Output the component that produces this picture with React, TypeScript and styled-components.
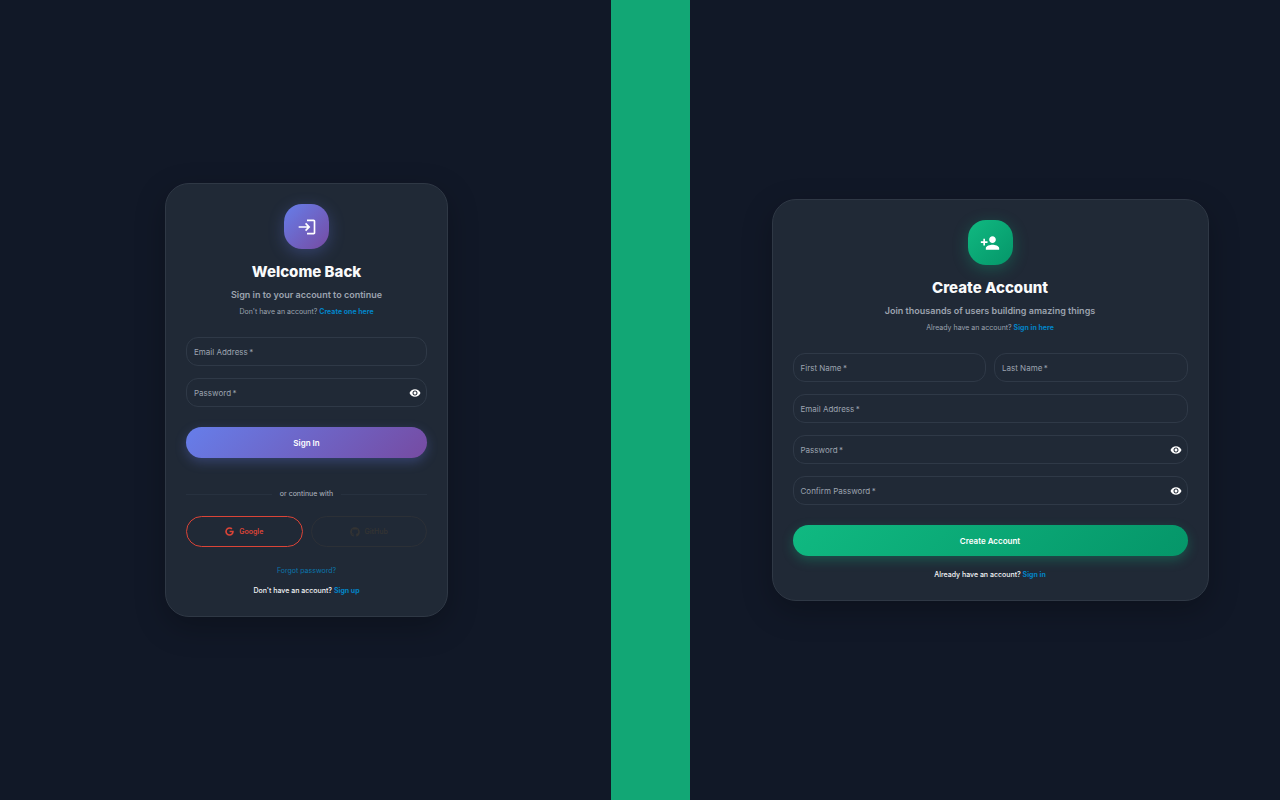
import React, { useId, useState } from "react";
import type { ReactNode } from "react";
import styled, { createGlobalStyle } from "styled-components";
import { MdLogin, MdPersonAdd, MdVisibility, MdVisibilityOff } from "react-icons/md";
import { FaGithub, FaGoogle } from "react-icons/fa";

const violet = {
  fill: "linear-gradient(135deg, #667eea 0%, #764ba2 100%)",
  glow: "rgba(102, 126, 234, 0.3)",
};
const emerald = {
  fill: "linear-gradient(135deg, #10b981 0%, #059669 100%)",
  glow: "rgba(16, 185, 129, 0.3)",
};
type Tone = typeof violet;

const GlobalStyle = createGlobalStyle`
  *, *::before, *::after { box-sizing: border-box; }
  body {
    margin: 0;
    background: #111827;
    color: #f9fafb;
    font-family: Inter, "Liberation Sans", sans-serif;
  }
  button, input { font: inherit; }
`;

const Page = styled.div`
  display: grid;
  grid-template-columns: 611fr 79fr 590fr;
  min-height: 100vh;
`;

const Panel = styled.main<{ $inset: number }>`
  display: flex;
  align-items: center;
  justify-content: center;
  padding-left: ${(p) => p.$inset}px;
`;

const Band = styled.div`
  background: #12a775;
`;

const Card = styled.section<{ $max: number }>`
  flex: 0 1 ${(p) => p.$max}px;
  padding: 20px 20px 19px;
  border: 1px solid #2f3845;
  border-radius: 24px;
  background: #202936;
  box-shadow: 0 10px 30px rgba(0, 0, 0, 0.25);
`;

const Header = styled.header`
  display: flex;
  flex-direction: column;
  align-items: center;
  margin-bottom: 19px;
  text-align: center;
`;

const Badge = styled.div<{ $tone: Tone }>`
  display: grid;
  place-items: center;
  width: 45px;
  height: 45px;
  margin-bottom: 13px;
  border-radius: 18px;
  background: ${(p) => p.$tone.fill};
  box-shadow: 0 4px 16px ${(p) => p.$tone.glow};
  color: #fff;
  svg { display: block; }
`;

const Title = styled.h1`
  margin: 0 0 6px;
  font-size: 15px;
  font-weight: 800;
  line-height: 20px;
`;

const Subtitle = styled.p`
  margin: 0 0 4px;
  color: #9ca3af;
  font-size: 9px;
  font-weight: 600;
  line-height: 14px;
`;

const Note = styled.p<{ $strong?: boolean }>`
  margin: 0;
  color: ${(p) => (p.$strong ? "#f3f4f6" : "#9ca3af")};
  font-size: 7px;
  font-weight: ${(p) => (p.$strong ? 500 : 400)};
  line-height: 12px;
  text-align: center;
`;

const Link = styled.a<{ $plain?: boolean }>`
  color: ${(p) => (p.$plain ? "#0b76ac" : "#0284c7")};
  font-weight: ${(p) => (p.$plain ? 400 : 700)};
  text-decoration: none;
`;

const Form = styled.form`
  display: flex;
  flex-direction: column;
  gap: 12px;
`;

const Pair = styled.div`
  display: grid;
  grid-template-columns: 1fr 1fr;
  gap: 8px;
`;

const FieldBox = styled.div`
  display: flex;
  align-items: center;
  position: relative;
  height: 29px;
  border: 1px solid #2f3947;
  border-radius: 12px;
  &:focus-within { border-color: #0284c7; }
`;

const FieldLabel = styled.label`
  position: absolute;
  left: 7px;
  color: #9ca3af;
  font-size: 8px;
  line-height: 12px;
  pointer-events: none;
`;

const FieldInput = styled.input`
  flex: 1;
  min-width: 0;
  height: 100%;
  padding: 0 7px;
  border: 0;
  outline: 0;
  background: transparent;
  color: #f9fafb;
  font-size: 8px;
  &:focus + label, &:not(:placeholder-shown) + label { visibility: hidden; }
`;

const EyeButton = styled.button`
  display: grid;
  place-items: center;
  margin-right: 5px;
  padding: 0;
  border: 0;
  background: none;
  color: #fff;
  cursor: pointer;
`;

const SubmitButton = styled.button<{ $tone: Tone }>`
  height: 31px;
  margin-top: 8px;
  border: 0;
  border-radius: 16px;
  background: ${(p) => p.$tone.fill};
  box-shadow: 0 4px 12px ${(p) => p.$tone.glow};
  color: #fff;
  font-size: 8px;
  font-weight: 600;
  cursor: pointer;
`;

const Divider = styled.div`
  display: flex;
  align-items: center;
  gap: 8px;
  margin: 30px 0 16px;
  color: #b4b9c1;
  font-size: 7px;
  font-weight: 400;
  line-height: 12px;
  &::before, &::after {
    content: "";
    flex: 1;
    height: 1px;
    background: #27313f;
  }
`;

const SocialButton = styled.button<{ $color: string; $edge: string }>`
  display: flex;
  align-items: center;
  justify-content: center;
  gap: 5px;
  height: 31px;
  padding: 0;
  border: 1px solid ${(p) => p.$edge};
  border-radius: 16px;
  background: none;
  color: ${(p) => p.$color};
  font-size: 7px;
  font-weight: 600;
  cursor: pointer;
`;

const Footer = styled.footer<{ $top: number }>`
  display: flex;
  flex-direction: column;
  gap: 8px;
  margin-top: ${(p) => p.$top}px;
`;

interface FieldProps {
  label: string;
  type?: string;
}

function Field({ label, type = "text" }: FieldProps) {
  const id = useId();
  const [shown, setShown] = useState(false);
  const secret = type === "password";
  return (
    <FieldBox>
      <FieldInput id={id} type={secret && shown ? "text" : type} placeholder=" " required />
      <FieldLabel htmlFor={id}>{label}{"\u2009*"}</FieldLabel>
      {secret && (
        <EyeButton
          type="button"
          aria-label={shown ? "Hide password" : "Show password"}
          onClick={() => setShown(!shown)}
        >
          {shown ? <MdVisibilityOff size={12} /> : <MdVisibility size={12} />}
        </EyeButton>
      )}
    </FieldBox>
  );
}

interface CardHeaderProps {
  tone: Tone;
  icon: ReactNode;
  title: string;
  subtitle: string;
  question: string;
  link: string;
}

function CardHeader({ tone, icon, title, subtitle, question, link }: CardHeaderProps) {
  return (
    <Header>
      <Badge $tone={tone}>{icon}</Badge>
      <Title>{title}</Title>
      <Subtitle>{subtitle}</Subtitle>
      <Note>
        {question} <Link href="#">{link}</Link>
      </Note>
    </Header>
  );
}

const keepOnPage = (event: React.FormEvent) => event.preventDefault();

export default function App() {
  return (
    <>
      <GlobalStyle />
      <Page>
        <Panel $inset={2}>
          <Card $max={283}>
            <CardHeader
              tone={violet}
              icon={<MdLogin size={20} />}
              title="Welcome Back"
              subtitle="Sign in to your account to continue"
              question="Don't have an account?"
              link="Create one here"
            />
            <Form onSubmit={keepOnPage}>
              <Field label="Email Address" type="email" />
              <Field label="Password" type="password" />
              <SubmitButton $tone={violet}>Sign In</SubmitButton>
            </Form>
            <Divider>or continue with</Divider>
            <Pair>
              <SocialButton type="button" $color="#db4437" $edge="#db4437">
                <FaGoogle size={9} />
                Google
              </SocialButton>
              <SocialButton type="button" $color="#333333" $edge="#2c3036">
                <FaGithub size={10} />
                GitHub
              </SocialButton>
            </Pair>
            <Footer $top={18}>
              <Note>
                <Link href="#" $plain>Forgot password?</Link>
              </Note>
              <Note $strong>
                Don't have an account? <Link href="#">Sign up</Link>
              </Note>
            </Footer>
          </Card>
        </Panel>
        <Band />
        <Panel $inset={10}>
          <Card $max={437}>
            <CardHeader
              tone={emerald}
              icon={<MdPersonAdd size={20} />}
              title="Create Account"
              subtitle="Join thousands of users building amazing things"
              question="Already have an account?"
              link="Sign in here"
            />
            <Form onSubmit={keepOnPage}>
              <Pair>
                <Field label="First Name" />
                <Field label="Last Name" />
              </Pair>
              <Field label="Email Address" type="email" />
              <Field label="Password" type="password" />
              <Field label="Confirm Password" type="password" />
              <SubmitButton $tone={emerald}>Create Account</SubmitButton>
            </Form>
            <Footer $top={13}>
              <Note $strong>
                Already have an account? <Link href="#">Sign in</Link>
              </Note>
            </Footer>
          </Card>
        </Panel>
      </Page>
    </>
  );
}
